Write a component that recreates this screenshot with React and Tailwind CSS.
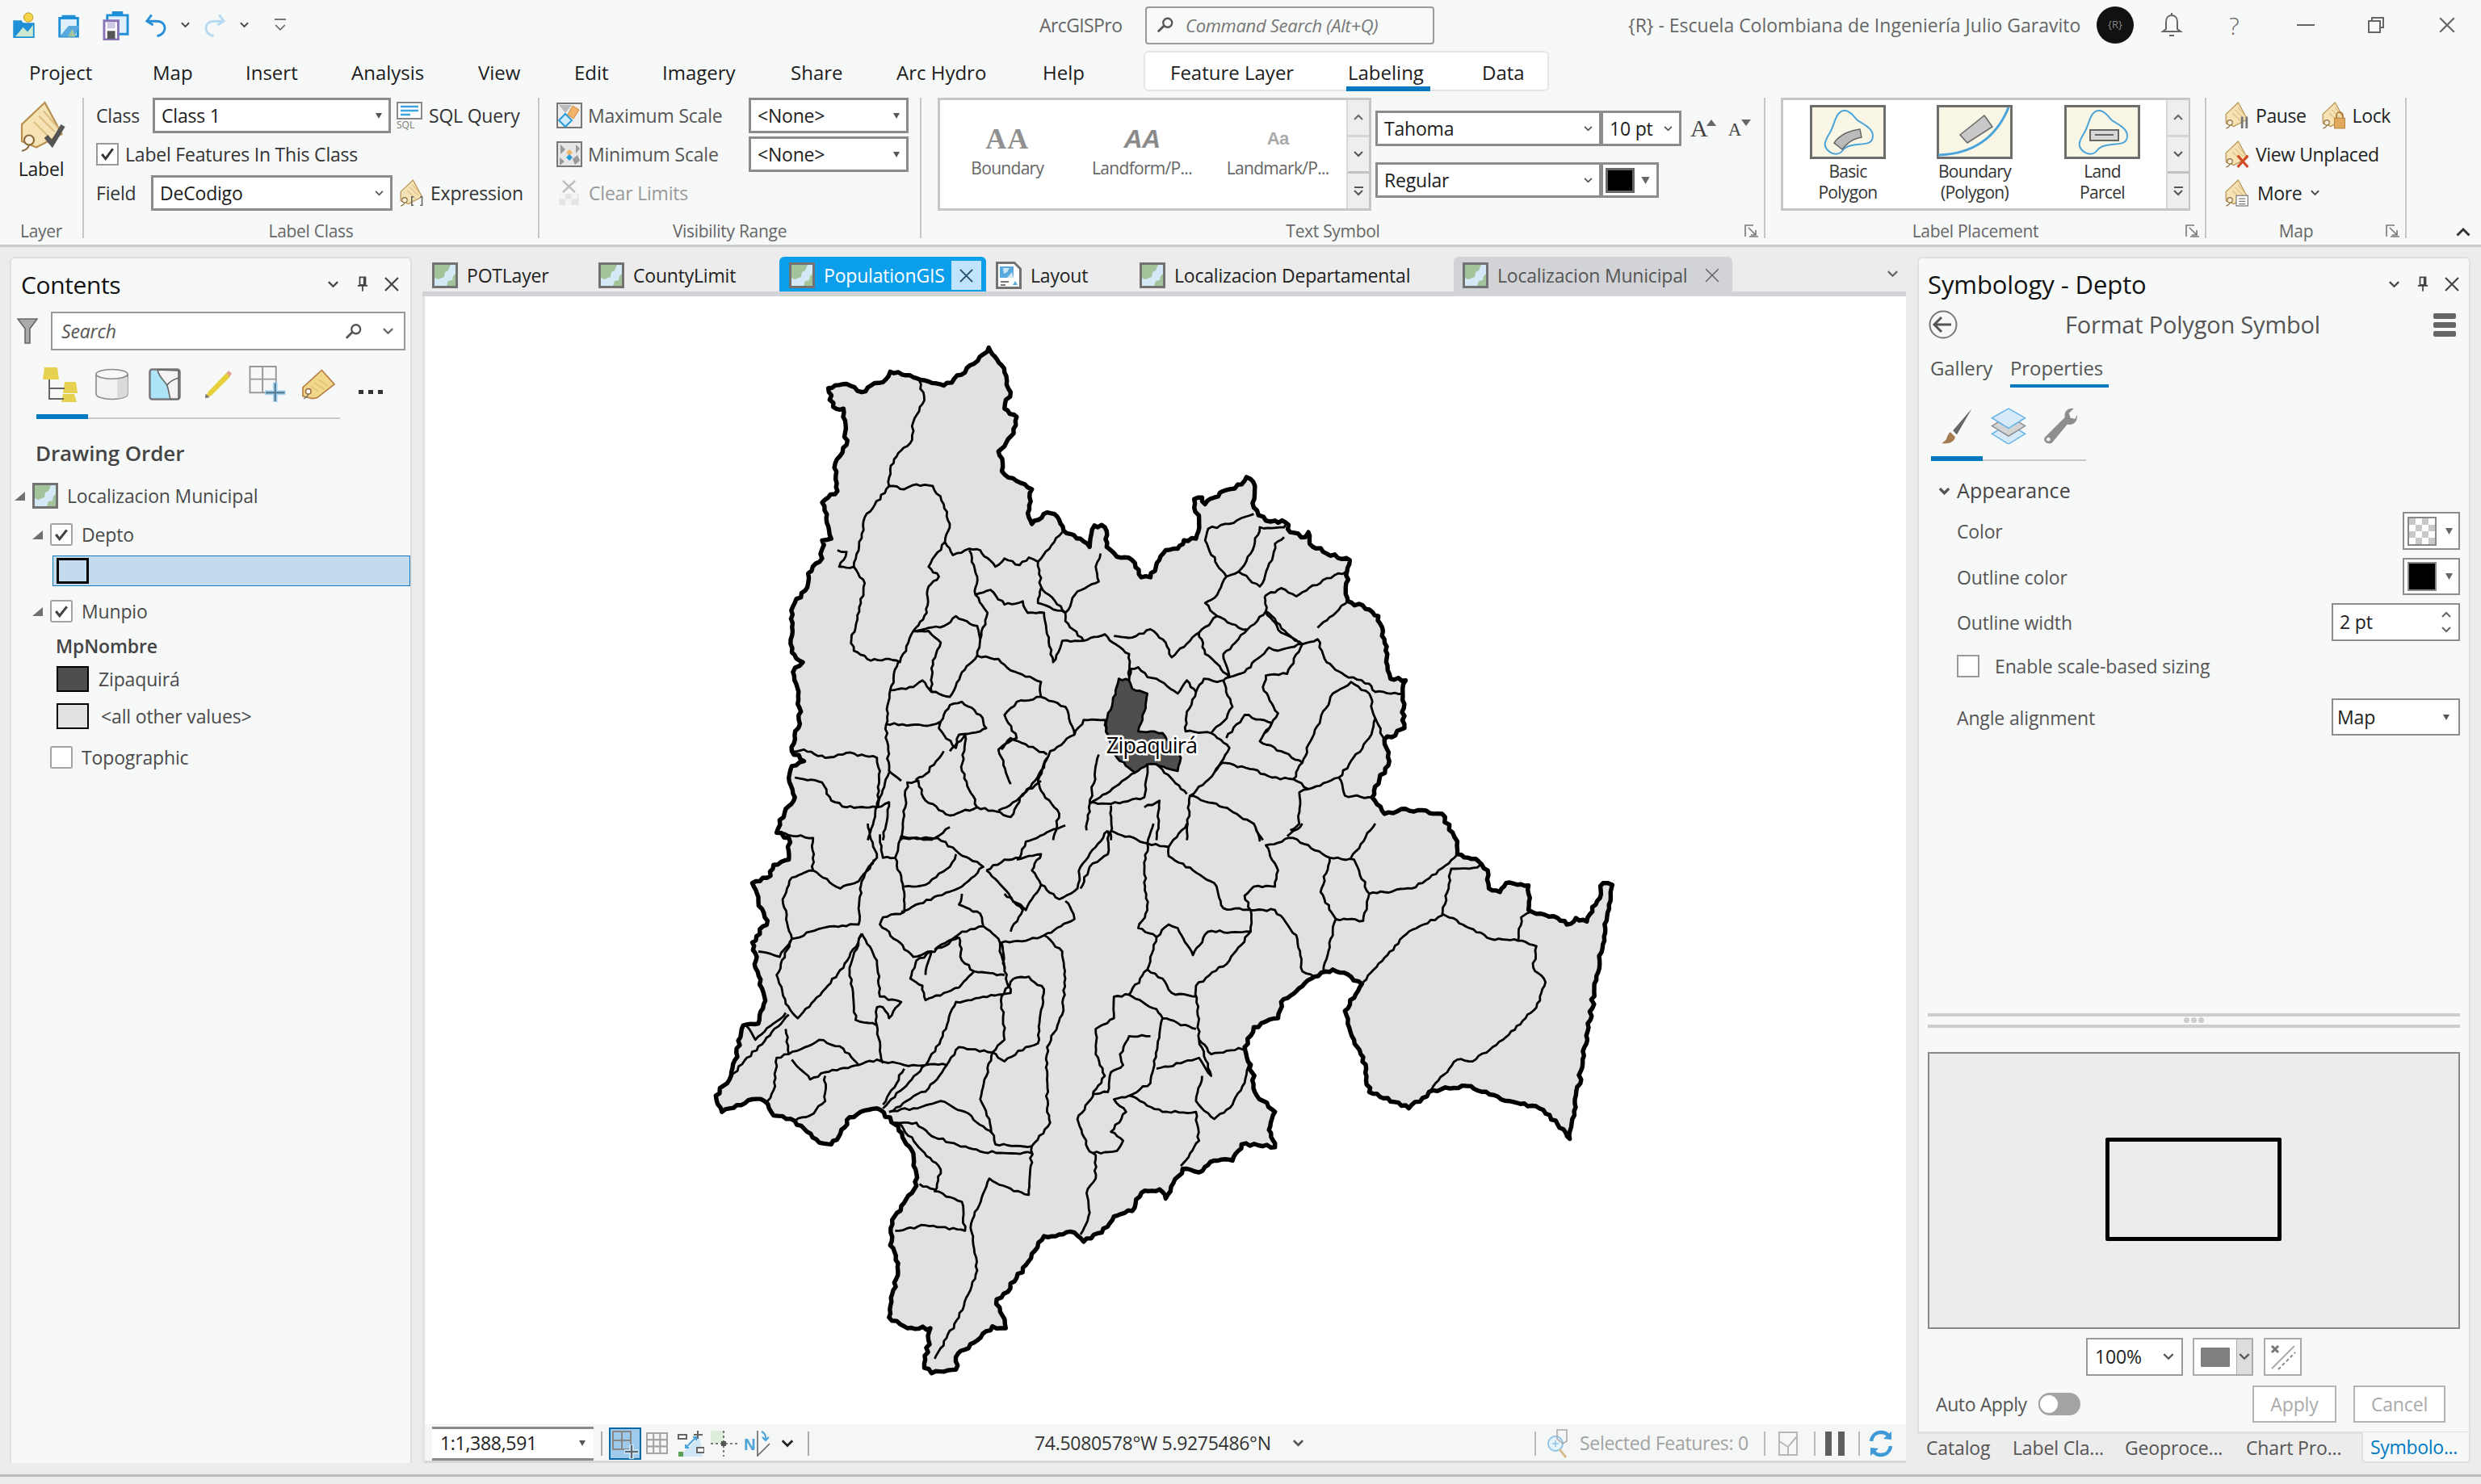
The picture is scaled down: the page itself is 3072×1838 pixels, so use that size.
import React from 'react'

// map tracing: points are read off two crops, f1 / f2 take them to page pixels
const f1 = ([x, y]) => [860 + x * 0.7526, 400 + y * 0.408]
const f2 = ([x, y]) => [860 + x * 0.7526, 1020 + y * 0.4464]
const parse = (s) => s.trim().split(/\s+/).map((p) => p.split(',').map(Number))

const noise = (n) => {
  const v = Math.sin(n * 12.9898) * 43758.5453
  return v - Math.floor(v) - 0.5
}

// breaks long straight runs into small wobbles so borders look digitised
const wiggle = (pts, amp, seed) => {
  const out = []
  let k = seed
  for (let i = 0; i < pts.length - 1; i++) {
    const [ax, ay] = pts[i]
    const [bx, by] = pts[i + 1]
    const len = Math.hypot(bx - ax, by - ay)
    const steps = Math.max(1, Math.round(len / 5))
    for (let s = 0; s < steps; s++) {
      const t = s / steps
      const off = s === 0 ? 0 : noise(k++) * amp * 2
      out.push([ax + (bx - ax) * t + (-(by - ay) / len) * off, ay + (by - ay) * t + ((bx - ax) / len) * off])
    }
  }
  out.push(pts[pts.length - 1])
  return out
}
const toD = (pts) => 'M' + pts.map((p) => p[0].toFixed(1) + ' ' + p[1].toFixed(1)).join('L')

const outerA = `484,75 490,95 505,128 510,150 520,210 510,260 530,285 525,335 500,390 510,460 530,480 555,505 550,590 555,610 580,575 592,580 607,630 635,655 650,680 658,615 675,620 678,680 695,710 720,720 735,772 750,772 775,690 795,685 805,660 825,655 830,610 822,535 835,530 840,550 870,510 900,490 908,468 922,495 920,560 940,600 955,600 972,605 980,635 1005,650 1010,635 1012,670 1040,700 1078,720 1072,790 1075,845 1110,870 1125,890 1135,960 1140,1040 1145,1080 1170,1085 1165,1120 1168,1230 1135,1265 1143,1330 1118,1420 1115,1440 1135,1490 1170,1475 1230,1490 1250,1560`
const outerB = `1255,50 1255,85 1290,105 1305,130 1307,180 1325,190 1335,165 1372,172 1372,240 1420,262 1435,280 1450,262 1468,272 1485,215 1495,165 1510,170 1440,875 1420,835 1390,790 1340,770 1270,728 1215,740 1175,790 1110,745 1105,680 1085,600 1070,520 1098,445 1080,425 1050,405 1020,425 990,465 965,495 960,540 920,565 905,620 917,690 925,755 955,800 945,850 955,898 900,890 885,935 855,935 830,968 803,958 775,1040 765,1015 735,1025 720,1075 690,1090 670,1135 640,1160 625,1135 575,1145 545,1225 530,1260 505,1315 497,1320 512,1400 490,1395 460,1440 430,1480 430,1515 390,1525 378,1510 388,1400 350,1400 320,1370 335,1220 322,1170 325,1100 365,1005 360,915 335,840 300,790 255,815 240,860 225,890 205,885 165,825 130,810 115,770 95,765 45,800 35,755 60,700 80,560 105,555 115,480 100,400 100,360 95,330 120,270 105,215 95,165 125,145 130,115 155,100 155,40 135,25`
const outerC = `150,1475 165,1440 155,1380 160,1345 180,1330 160,1300 175,1180 162,1060 178,1030 160,1000 162,860 187,790 187,760 210,715 210,660 225,655 210,545 235,510 230,440 250,370 245,260 228,255 220,198 250,185 275,210 290,190 310,180 322,148 360,165 385,178 410,190 445,150 475,95 484,75`

const innerA = [
  '370,175 378,235 360,300 358,355 335,395 322,445 320,495 345,505 365,490 392,495 410,550 420,610 412,665 385,740 402,770 385,800 382,880 360,935 338,1030 320,1020 290,1025 262,995 258,960 268,900 280,790 262,740 275,640 280,590 320,495',
  '235,690 250,695 238,740 262,740',
  '412,665 425,705 445,690 452,685 470,690 495,740 510,715 535,735 550,712 565,725 605,635',
  '565,725 570,800 610,880 630,815 665,785 660,740 668,700',
  '452,690 465,770 462,825 487,810 510,855 540,845 548,880 575,880 590,1030 605,965 640,965 675,945 688,970 715,1005 715,1085',
  '570,805 565,850 610,880 610,905 640,965',
  '462,825 482,880 470,960 465,1010 500,1020 520,1055 570,1090 570,1135 530,1150 510,1190 530,1260 500,1295 520,1400',
  '360,935 385,935 405,970 392,1025 390,1120 420,1135 440,1060 465,1010',
  '360,935 410,920 430,890 465,920 470,960',
  '335,1030 322,1115 315,1220 320,1360 340,1390',
  '322,1115 360,1105 375,1085 390,1120',
  '315,1218 390,1220 405,1210 420,1160 440,1150 470,1190 480,1230 470,1240 435,1250 430,1290 410,1250 402,1230 405,1210',
  '160,1300 180,1295 215,1320 250,1305 300,1320 305,1360 300,1470 250,1470 225,1450 210,1395 180,1385 165,1380',
  '570,1135 610,1165 625,1250 585,1300 575,1350 560,1390 530,1450 500,1480',
  '625,1250 640,1205 675,1205 680,1250',
  '715,1085 718,1050 730,1045 745,1075 760,1080 795,1125 810,1085 825,1120 810,1180 808,1240 850,1245 880,1290 855,1365 868,1335',
  '825,1120 838,1080 860,1090 870,1085 885,1165 870,1210 850,1245',
  '690,950 720,955 750,930 775,970 785,1015 830,940 860,890 840,850 860,825 875,770 860,735 840,660 845,625 880,610 920,580',
  '830,940 840,1005 860,1035 870,1060 880,1075 870,1085',
  '860,890 895,925 910,930 940,875 980,950 1000,975 1025,960 1040,1030 1070,1070 1110,1095 1120,1120 1165,1125',
  '875,770 895,755 915,700 930,620 970,620 975,605',
  '970,650 955,670 950,720 930,800 895,755',
  '938,830 965,805 990,830 1040,775 1072,755',
  '938,830 940,875 965,940 1000,975',
  '1025,925 1060,870 1075,840',
  '910,930 890,970 870,1005 880,1075 905,1060 945,985 960,995 1000,975 975,1065 940,1070 935,1105 960,1185 930,1270 965,1300 1000,1335 985,1385 950,1380 920,1355 868,1335',
  '930,1270 950,1215 905,1190 875,1260',
  '1000,1335 1010,1280 1050,1125 1080,1090 1110,1125 1120,1200 1110,1260 1060,1380 1010,1415 985,1385',
  '1120,1200 1135,1265',
  '1060,1380 1070,1435 1115,1440',
  '1010,1415 995,1425 995,1520 980,1540',
  '855,1365 815,1435 870,1470 920,1520 935,1570',
  '815,1435 810,1570',
  '760,1340 810,1430',
  '725,1365 650,1460 645,1540',
  '745,1340 740,1440 685,1460 650,1455',
  '740,1470 765,1450 760,1570',
  '685,1465 685,1570',
  '665,1310 650,1460',
  '580,1320 565,1390 570,1420 600,1490 590,1570',
  '505,1295 520,1260 580,1310',
  '410,1300 380,1370 365,1385 380,1450 420,1495 465,1470 490,1480 520,1500 540,1430 570,1390',
  '420,1300 445,1250 440,1360 465,1470',
  '370,1390 350,1395 340,1570',
  '320,1365 305,1440 285,1570',
  '300,1470 320,1455 310,1570',
]
const innerB = [
  '285,0 300,95 270,160 240,180 195,130 195,40 135,25',
  '195,130 160,150 145,210 160,320 140,370 105,355',
  '160,320 210,290 270,280 275,160 295,100',
  '305,30 310,95 330,95 340,35 390,45 420,10',
  '330,95 345,190 345,245 310,260 305,280 360,370 390,355 380,420',
  '340,40 400,40 430,75 475,120 440,175 400,200 340,245',
  '345,175 380,170 420,120 430,85',
  '480,130 540,240 520,300',
  '480,130 510,100 535,95 545,50 610,5',
  '530,100 570,85 555,130 570,170 600,210 630,180 635,120 680,20',
  '570,170 545,240 510,195',
  '685,20 745,55 780,65 780,90 855,165 870,235 915,240 915,300 880,380 825,450 830,600 850,640 915,620',
  '745,55 740,130 745,240 730,290 760,315 745,405',
  '780,65 810,0',
  '745,55 755,0',
  '620,240 625,265 575,310 545,325 505,330 510,410',
  '610,215 620,240',
  '680,20 680,85 650,120 635,180',
  '440,195 435,225 470,250 475,285 440,300 395,350',
  '475,285 500,320 510,410 520,470 430,495 405,600 380,670 310,790',
  '575,310 605,355 610,430 605,530 580,620 580,790 585,830 555,895',
  '525,430 550,425 575,460 565,610 545,620 510,660 490,635 510,600 505,480 525,430',
  '435,315 440,380 460,410 510,420',
  '435,315 365,380 355,430 375,450 380,490 410,470 435,455 460,410',
  '275,305 300,380 305,480 340,495 320,540 310,510 300,510 300,560 265,545 255,400 275,305',
  '275,310 245,400 170,540 150,500 135,420 160,320',
  '150,525 100,600 85,560',
  '155,530 60,700',
  '150,570 155,640 135,650 130,740 120,770',
  '155,640 205,600 245,625 270,670 300,655 345,670 380,670',
  '160,655 190,710 215,690 240,680 270,670',
  '215,700 215,770 190,810 165,825',
  '300,560 310,665',
  '345,680 310,780',
  '415,670 385,735 320,800',
  '380,670 415,670 435,620 490,635 470,765 485,820 495,890 555,895',
  '320,800 360,790 405,770 445,800 490,860',
  '330,830 365,830 385,860 420,885 470,910 555,915',
  '335,830 365,890 405,960 395,1020 440,1050 445,1130 380,1115 330,1130',
  '395,1015 370,1000',
  '555,895 550,1030 525,1020 485,985 455,1110 460,1180 465,1240 435,1370 395,1485',
  '745,405 715,475 690,480 690,540 660,570 660,640 675,700 630,820 650,910 660,920 660,985 645,1025 650,1080 635,1140',
  '745,405 770,430 785,470 825,480',
  '715,475 760,515 770,540 825,570',
  '770,540 755,680 750,720 715,755 690,765 710,800 685,855 705,880 695,908 655,915',
  '830,600 850,700 830,650 800,665 760,680',
  '750,590 715,590 700,640 705,670 685,690 680,745 655,750',
  '835,700 825,770 855,820 885,780 905,720 915,650',
  '715,755 770,800 825,800 830,880 800,950',
  '915,300 845,300 820,365 795,290 780,280 760,315',
  '915,240 955,240 990,310 1000,410 1020,425',
  '915,240 905,200 920,175 955,175 960,130 940,60 985,40 1045,95 1030,190 1055,265 1035,410',
  '1045,95 1085,100 1110,195 1100,270 1055,265',
  '1110,195 1180,180 1220,140 1255,85',
  '1080,95 1120,0',
  '930,50 920,0',
  '975,35 1000,0',
  '1100,440 1140,365 1175,300 1230,255 1245,125 1275,125 1300,115',
  '1230,250 1310,320 1355,325 1385,340 1380,400 1400,440 1385,510 1330,600 1280,660 1255,655 1215,730 1210,750',
  '1355,325 1360,260 1375,245',
]
const zipaPts = '698,1080 715,1085 720,1110 745,1125 740,1180 730,1240 750,1240 770,1245 800,1320 795,1360 760,1340 745,1340 725,1365 695,1320 680,1250 675,1220 688,1150 698,1080'

const outerPts = [...parse(outerA).map(f1), ...parse(outerB).map(f2), ...parse(outerC).map(f1)]
const outerD = toD(wiggle(outerPts, 2.2, 3)) + 'Z'
const innerD = [
  ...innerA.map((s, i) => toD(wiggle(parse(s).map(f1), 1.5, 100 + i * 50))),
  ...innerB.map((s, i) => toD(wiggle(parse(s).map(f2), 1.5, 4000 + i * 50))),
].join('')
const zipaD = toD(wiggle(parse(zipaPts).map(f1), 1.2, 9000)) + 'Z'

const MapDrawing = () => (
  <svg viewBox="526 367 1834 1397" className="block w-[1834px] h-[1397px]">
    <defs>
      <clipPath id="dept"><path d={outerD} /></clipPath>
    </defs>
    <path d={outerD} fill="#e1e1e1" />
    <g clipPath="url(#dept)" fill="none" stroke="#000" strokeWidth="2.8" strokeLinejoin="round">
      <path d={zipaD} fill="#4e4e4e" />
      <path d={innerD} />
    </g>
    <path d={outerD} fill="none" stroke="#000" strokeWidth="5.4" strokeLinejoin="round" />
    <text x="1426" y="933" textAnchor="middle" fontSize="27" fontFamily="Open Sans, sans-serif" letterSpacing="-0.8" fill="#000" stroke="#fff" strokeWidth="5" paintOrder="stroke">Zipaquirá</text>
  </svg>
)

// small drawn bits
const Chev = ({ className = 'w-[12px] h-[8px]', color = '#555', w = 2 }) => (
  <svg viewBox="0 0 12 8" className={className}><path d="M1 1l5 5 5-5" fill="none" stroke={color} strokeWidth={w} /></svg>
)
const ChevUp = ({ className = 'w-[12px] h-[8px]', color = '#666', w = 2 }) => (
  <svg viewBox="0 0 12 8" className={className}><path d="M1 7l5-5 5 5" fill="none" stroke={color} strokeWidth={w} /></svg>
)
const Tri = ({ className = 'w-[8px] h-[7px]', color = '#555' }) => (
  <svg viewBox="0 0 8 7" className={className}><path d="M0 0h8L4 7z" fill={color} /></svg>
)
const Cross = ({ className = 'w-[20px] h-[20px]', color = '#444', w = 2 }) => (
  <svg viewBox="0 0 20 20" className={className}><path d="M2 2l16 16M18 2L2 18" stroke={color} strokeWidth={w} /></svg>
)
const Pin = ({ className = 'w-[16px] h-[22px]' }) => (
  <svg viewBox="0 0 16 22" className={className}><path d="M4 1h8v11H4zM1 13h14M8 13v8" fill="none" stroke="#444" strokeWidth="2" /><path d="M9 2h3v10H9z" fill="#444" /></svg>
)
const Lens = ({ className = 'w-[24px] h-[22px]', color = '#555' }) => (
  <svg viewBox="0 0 24 22" className={className}><circle cx="15" cy="8" r="6" fill="none" stroke={color} strokeWidth="2.5" /><path d="M10 12L2 20" stroke={color} strokeWidth="3" /></svg>
)
const Launcher = () => (
  <svg viewBox="0 0 18 16" className="w-[18px] h-[16px]"><path d="M1 15V1h10M6 15h11" fill="none" stroke="#777" strokeWidth="1.6" /><path d="M5 4l9 9M14 7v6H8" fill="none" stroke="#777" strokeWidth="1.6" /></svg>
)
const MapThumb = ({ className = 'w-[32px] h-[32px]' }) => (
  <svg viewBox="0 0 32 32" className={className}>
    <rect x="1.5" y="1.5" width="29" height="29" fill="#d3eaf6" stroke="#727272" strokeWidth="3" />
    <path d="M3 3h20l-3 7-4 2-1 6-8 3-4-2z" fill="#a3c49a" />
    <path d="M29 14v15H18l2-6 5-1 1-5z" fill="#a3c49a" />
  </svg>
)
const Tag = ({ className, badge }) => (
  <svg viewBox="0 0 40 44" className={className}>
    <path d="M23 2l14 26-21 11-12-5V20z" fill="#f5e3b5" stroke="#b8904f" strokeWidth="1.5" />
    <path d="M14 18l13 13M18 13l13 13M22 9l12 14" stroke="#dcbc80" strokeWidth="1.3" />
    <circle cx="10" cy="33" r="4" fill="#f9f1dc" stroke="#8a6a3a" strokeWidth="1.4" />
    <path d="M10 37q-1 4-6 5" fill="none" stroke="#8a6a3a" strokeWidth="1.3" />
    {badge}
  </svg>
)

const Select = ({ className, text, caret = 'tri', border = 'border-[#8c8c8c]' }) => (
  <div className={`flex items-center justify-between bg-white border-[3px] px-[8px] ${border} ${className}`}>
    <span className="text-[#1c1c1c] whitespace-nowrap">{text}</span>
    {caret === 'tri' ? <Tri /> : <Chev className="w-[11px] h-[7px]" />}
  </div>
)

const ScrollCol = () => (
  <div className="w-[28px] h-full flex flex-col bg-[#eceeef] border-l-[2px] border-[#d6d8da]">
    <div className="flex-1 flex items-center justify-center border-b-[3px] border-[#d3d5d7]"><ChevUp /></div>
    <div className="flex-1 flex items-center justify-center border-b-[3px] border-[#c0c2c4]"><Chev /></div>
    <div className="flex-1 flex flex-col items-center justify-center gap-[2px]">
      <div className="w-[11px] h-[2px] bg-[#555]" />
      <Chev />
    </div>
  </div>
)

const Group = ({ className, label, launcher, children }) => (
  <div className={`flex flex-col shrink-0 border-r-[2px] border-[#c4c6c8] ${className}`}>
    <div className="h-[140px] flex">{children}</div>
    <div className="h-[34px] flex items-end text-[#666] text-[21px] tracking-[-0.3px]">
      <div className="flex-1 text-center leading-[24px] translate-y-[3px]">{label}</div>
      {launcher && <div className="w-[24px] pb-[1px]"><Launcher /></div>}
    </div>
  </div>
)

const Qat = () => (
  <div className="w-[1287px] shrink-0 flex items-center">
    <svg viewBox="0 0 32 36" className="ml-[14px] w-[31px] h-[34px]">
      <path d="M2 12h11l2 3h15v20H2z" fill="#1f8fd6" />
      <path d="M5 33l10-12 6 6 7-9v15z" fill="#cde9d0" />
      <circle cx="22" cy="8" r="6" fill="#f5d547" stroke="#b48f1a" />
    </svg>
    <svg viewBox="0 0 32 36" className="ml-[25px] w-[32px] h-[34px]">
      <path d="M6 5h18v4H6z" fill="#1f8fd6" /><path d="M3 9h24v24H3z" fill="#dff0fa" stroke="#1f8fd6" strokeWidth="3" />
      <path d="M3 33l12-14h14l-6 14z" fill="#58a9de" /><path d="M14 33l6-10 4 10z" fill="#a3c49a" />
    </svg>
    <svg viewBox="0 0 34 38" className="ml-[25px] w-[33px] h-[37px]">
      <path d="M12 1h14v5H12z" fill="#1f8fd6" /><path d="M6 6h26v24H6z" fill="#dff0fa" stroke="#1f8fd6" strokeWidth="3" />
      <path d="M2 13h18v24H2z" fill="#fff" stroke="#8a72b8" strokeWidth="3" /><path d="M6 26h10v10H6z" fill="#555" /><path d="M6 15h10v8H6z" fill="#cfc6e2" />
    </svg>
    <svg viewBox="0 0 28 32" className="ml-[20px] w-[27px] h-[32px]">
      <path d="M8 3L2 11l8 5M3 11h11c8 0 11 5 11 9s-3 9-10 10" fill="none" stroke="#2b8fd8" strokeWidth="3" />
    </svg>
    <Chev className="ml-[17px] w-[11px] h-[8px]" color="#444" />
    <svg viewBox="0 0 28 32" className="ml-[17px] w-[27px] h-[32px]">
      <path d="M20 3l6 8-8 5M25 11H14C6 11 3 16 3 20s3 9 10 10" fill="none" stroke="#b7daf2" strokeWidth="3" />
    </svg>
    <Chev className="ml-[18px] w-[11px] h-[8px]" color="#444" />
    <div className="ml-[32px] flex flex-col items-center gap-[4px]">
      <div className="w-[14px] h-[2px] bg-[#777]" />
      <Chev className="w-[14px] h-[11px]" color="#666" w={1.4} />
    </div>
  </div>
)

const TitleBar = () => (
  <div className="h-[62px] flex items-center text-[23px] text-[#666]">
    <Qat />
    <div className="w-[131px] shrink-0 tracking-[-0.6px]">ArcGISPro</div>
    <div className="w-[358px] h-[47px] shrink-0 flex items-center border-[2px] border-[#9a9a9a] rounded-[4px] bg-[#f8f9f9] pl-[12px]">
      <Lens className="w-[22px] h-[26px]" />
      <span className="ml-[14px] italic text-[#777] text-[22px] tracking-[-0.3px] whitespace-nowrap">Command Search (Alt+Q)</span>
    </div>
    <div className="w-[240px] shrink-0" />
    <div className="w-[563px] shrink-0 whitespace-nowrap">{'{R} - Escuela Colombiana de Ingeniería Julio Garavito'}</div>
    <div className="ml-[17px] w-[46px] h-[46px] rounded-full bg-[#111] shrink-0 flex items-center justify-center text-[#888] text-[13px]">{'{R}'}</div>
    <svg viewBox="0 0 28 34" className="ml-[33px] w-[28px] h-[34px]"><path d="M14 2v3M7 22V13c0-5 3-8 7-8s7 3 7 8v9l4 3H3z M11 30h6" fill="none" stroke="#666" strokeWidth="2" /></svg>
    <div className="ml-[57px] text-[30px] font-light">?</div>
    <div className="ml-[71px] w-[22px] h-[2px] bg-[#666]" />
    <svg viewBox="0 0 20 20" className="ml-[66px] w-[20px] h-[20px]"><path d="M5 5V1h14v12h-4M1 5h14v14H1z" fill="none" stroke="#666" strokeWidth="2" /></svg>
    <Cross className="ml-[67px] w-[22px] h-[22px]" color="#666" />
  </div>
)

const MenuRow = () => (
  <div className="h-[59px] flex items-start text-[24px] text-[#1c1c1c]">
    <div className="w-[189px] h-[56px] flex items-center pl-[36px]">Project</div>
    <div className="w-[115px] h-[56px] flex items-center">Map</div>
    <div className="w-[131px] h-[56px] flex items-center">Insert</div>
    <div className="w-[157px] h-[56px] flex items-center">Analysis</div>
    <div className="w-[119px] h-[56px] flex items-center">View</div>
    <div className="w-[109px] h-[56px] flex items-center">Edit</div>
    <div className="w-[159px] h-[56px] flex items-center">Imagery</div>
    <div className="w-[131px] h-[56px] flex items-center">Share</div>
    <div className="w-[181px] h-[56px] flex items-center">Arc Hydro</div>
    <div className="w-[125px] h-[56px] flex items-center">Help</div>
    <div className="w-[502px] h-[50px] mt-[1px] flex bg-white rounded-[6px] border-[2px] border-[#e4e6e6]">
      <div className="w-[249px] h-[46px] pl-[31px] pt-[10px] leading-[30px]">Feature Layer</div>
      <div className="w-[104px] h-[48px] flex flex-col justify-between">
        <div className="pt-[10px] leading-[30px] pl-[2px]">Labeling</div>
        <div className="h-[6px] bg-[#0079c1]" />
      </div>
      <div className="pl-[64px] pt-[10px] leading-[30px]">Data</div>
    </div>
  </div>
)

const Ribbon = () => (
  <div className="h-[174px] flex text-[23px] tracking-[-0.2px] text-[#333]">
    <Group className="w-[104px]" label="Layer">
      <div className="w-full flex flex-col items-center pt-[3px]">
        <Tag
          className="w-[66px] h-[66px]"
          badge={<path d="M24 30l5 6 9-15" fill="none" stroke="#555" strokeWidth="4" />}
        />
        <div className="mt-[2px] text-[#1c1c1c]">Label</div>
      </div>
    </Group>

    <Group className="w-[564px]" label="Label Class">
      <div className="pl-[15px] flex flex-col gap-[4px] w-full">
        <div className="h-[44px] flex items-center">
          <span className="w-[70px]">Class</span>
          <Select className="w-[295px] h-[44px]" text="Class 1" />
          <div className="ml-[7px] w-[32px] flex flex-col">
            <svg viewBox="0 0 32 22" className="w-[32px] h-[22px]">
              <rect x="1" y="1" width="30" height="20" fill="#fff" stroke="#888" strokeWidth="2" />
              <path d="M5 6h22M5 11h22M5 16h12" stroke="#3fa3e0" strokeWidth="2.5" />
            </svg>
            <span className="text-[12px] leading-[13px] tracking-normal text-[#777]">SQL</span>
          </div>
          <span className="ml-[8px] whitespace-nowrap">SQL Query</span>
        </div>
        <div className="h-[44px] flex items-center">
          <div className="w-[28px] h-[28px] border-[2px] border-[#999] bg-white flex items-center justify-center">
            <svg viewBox="0 0 16 16" className="w-[18px] h-[18px]"><path d="M2 8l4 5 8-11" fill="none" stroke="#333" strokeWidth="2.6" /></svg>
          </div>
          <span className="ml-[8px] whitespace-nowrap">Label Features In This Class</span>
        </div>
        <div className="h-[44px] flex items-center">
          <span className="w-[68px]">Field</span>
          <Select className="w-[299px] h-[44px]" text="DeCodigo" caret="chev" />
          <Tag
            className="ml-[7px] w-[32px] h-[36px]"
            badge={<path d="M24 28h-3v13h3M34 28h3v13h-3" fill="none" stroke="#666" strokeWidth="2" />}
          />
          <span className="ml-[8px] whitespace-nowrap">Expression</span>
        </div>
      </div>
    </Group>

    <Group className="w-[473px]" label="Visibility Range">
      <div className="pl-[21px] flex flex-col gap-[4px] w-full">
        <div className="h-[44px] flex items-center">
          <svg viewBox="0 0 32 32" className="w-[32px] h-[32px]">
            <rect x="1" y="1" width="30" height="30" fill="#efefef" stroke="#777" strokeWidth="2" />
            <path d="M3 3l8 10 8-10zM3 29l7-10" fill="#bbb" />
            <path d="M20 4l8 5-7 11-7-5z" fill="#f0b46a" stroke="#d8852c" />
            <path d="M11 14l8 8-8 8-8-8z" fill="#cfeafa" stroke="#2a9ad8" strokeWidth="2" />
          </svg>
          <span className="ml-[7px] w-[199px] text-[#555] whitespace-nowrap">Maximum Scale</span>
          <Select className="w-[198px] h-[44px]" text="<None>" />
        </div>
        <div className="h-[44px] flex items-center">
          <svg viewBox="0 0 32 32" className="w-[32px] h-[32px]">
            <rect x="1" y="1" width="30" height="30" fill="#e6e6e6" stroke="#777" strokeWidth="2" />
            <path d="M5 4l6 6-6 6zM24 4l5 5-5 6zM4 20l6 5-6 5zM20 22l6-5 3 7-6 5z" fill="#999" />
            <path d="M16 10l4 4-4 4-4-4z" fill="#f0b46a" />
            <path d="M16 16l4 4-4 4-4-4z" fill="#2a9ad8" />
          </svg>
          <span className="ml-[7px] w-[199px] text-[#555] whitespace-nowrap">Minimum Scale</span>
          <Select className="w-[198px] h-[44px]" text="<None>" />
        </div>
        <div className="h-[44px] flex items-center">
          <svg viewBox="0 0 32 34" className="w-[31px] h-[32px]">
            <path d="M8 1l16 15M24 1L8 16" stroke="#bbb" strokeWidth="2.5" />
            <path d="M3 18h26v15H3z" fill="#e4e4e4" />
            <path d="M3 18h8v7H3zM19 18h8v7h-8zM11 25h8v8h-8z" fill="#f4f4f4" />
          </svg>
          <span className="ml-[9px] text-[#999] whitespace-nowrap">Clear Limits</span>
        </div>
      </div>
    </Group>

    <Group className="w-[1045px]" label="Text Symbol" launcher>
      <div className="pl-[20px] flex">
        <div className="w-[537px] h-[140px] flex bg-white border-[3px] border-[#c4c6c8] text-[#666] text-[21px] tracking-[-0.7px]">
          <div className="w-[167px] flex flex-col items-center pt-[26px]">
            <div className="font-['Liberation_Serif',serif] font-bold text-[36px] leading-[44px] text-[#909090] tracking-[1px]">AA</div>
            <div className="leading-[28px]">Boundary</div>
          </div>
          <div className="w-[167px] flex flex-col items-center pt-[26px]">
            <div className="font-['Liberation_Sans',sans-serif] italic font-bold text-[32px] leading-[44px] text-[#8a8a8a]">AA</div>
            <div className="leading-[28px] whitespace-nowrap">Landform/P...</div>
          </div>
          <div className="w-[170px] flex flex-col items-center pt-[26px]">
            <div className="font-['Liberation_Sans',sans-serif] font-bold text-[22px] leading-[44px] text-[#aaa]">Aa</div>
            <div className="leading-[28px] whitespace-nowrap">Landmark/P...</div>
          </div>
          <ScrollCol />
        </div>
        <div className="ml-[5px] pt-[16px] flex flex-col gap-[20px]">
          <div className="h-[44px] flex items-center">
            <Select className="w-[280px] h-[44px]" text="Tahoma" caret="chev" />
            <Select className="w-[100px] h-[44px] -ml-[1px]" text="10 pt" caret="chev" />
            <span className="ml-[11px] font-['Liberation_Serif',serif] text-[30px] leading-[32px] text-[#444] tracking-normal">A</span>
            <svg viewBox="0 0 12 8" className="-ml-[2px] mb-[14px] w-[12px] h-[8px]"><path d="M0 8l6-8 6 8z" fill="#666" /></svg>
            <span className="ml-[15px] font-['Liberation_Serif',serif] text-[23px] leading-[32px] text-[#444] tracking-normal pt-[3px]">A</span>
            <svg viewBox="0 0 12 8" className="mb-[14px] w-[12px] h-[8px]"><path d="M0 0h12L6 8z" fill="#666" /></svg>
          </div>
          <div className="h-[44px] flex items-center">
            <Select className="w-[280px] h-[44px]" text="Regular" caret="chev" />
            <div className="-ml-[1px] w-[72px] h-[44px] flex items-center bg-white border-[3px] border-[#8c8c8c] pl-[3px]">
              <div className="w-[36px] h-[31px] bg-black border-[3px] border-[#666]" />
              <Tri className="ml-[8px] w-[11px] h-[9px]" color="#666" />
            </div>
          </div>
        </div>
      </div>
    </Group>

    <Group className="w-[546px]" label="Label Placement" launcher>
      <div className="pl-[19px]">
        <div className="w-[507px] h-[140px] flex bg-white border-[3px] border-[#c4c6c8] text-[#333] text-[21px] tracking-[-0.7px] leading-[26px]">
          <div className="w-[158px] flex flex-col items-center pt-[6px] pl-[2px]">
            <svg viewBox="0 0 94 67" className="w-[94px] h-[67px] shrink-0">
              <rect x="1.5" y="1.5" width="91" height="64" fill="#f9f6e6" stroke="#6d6d6d" strokeWidth="3" />
              <path d="M44 7C52 8 55 16 59 19S78 28 78 38 70 48 59 49 44 52 40 57 28 62 22 56 19 44 25 34 32 6 44 7z" fill="none" stroke="#4aa3d9" strokeWidth="2" />
              <path d="M33 43Q44 32 62 30L64 40Q50 42 40 55L30 47z" fill="#bbb" stroke="#666" strokeWidth="1.5" />
            </svg>
            <div className="mt-[2px] text-center">Basic<br />Polygon</div>
          </div>
          <div className="w-[158px] flex flex-col items-center pt-[6px]">
            <svg viewBox="0 0 94 67" className="w-[94px] h-[67px] shrink-0">
              <rect x="1.5" y="1.5" width="91" height="64" fill="#f9f6e6" stroke="#6d6d6d" strokeWidth="3" />
              <path d="M2 62Q66 60 89 3" fill="none" stroke="#4aa3d9" strokeWidth="3" />
              <path d="M59 13L69 27 38 47 29 37z" fill="#c8c8c8" stroke="#666" strokeWidth="1.5" />
            </svg>
            <div className="mt-[2px] text-center">Boundary<br />(Polygon)</div>
          </div>
          <div className="w-[158px] flex flex-col items-center pt-[6px]">
            <svg viewBox="0 0 94 67" className="w-[94px] h-[67px] shrink-0">
              <rect x="1.5" y="1.5" width="91" height="64" fill="#f9f6e6" stroke="#6d6d6d" strokeWidth="3" />
              <path d="M44 7C52 8 55 16 59 19S78 28 78 38 70 48 59 49 44 52 40 57 28 62 22 56 19 44 25 34 32 6 44 7z" fill="none" stroke="#4aa3d9" strokeWidth="2" />
              <rect x="32" y="31" width="35" height="13" fill="#d8d8d8" stroke="#666" strokeWidth="2" />
              <path d="M38 37h23" stroke="#666" strokeWidth="2" />
            </svg>
            <div className="mt-[2px] text-center">Land<br />Parcel</div>
          </div>
          <div className="w-[27px]"><ScrollCol /></div>
        </div>
      </div>
    </Group>

    <Group className="w-[248px]" label="Map" launcher>
      <div className="pl-[21px] flex flex-col gap-[4px] w-full text-[#222] tracking-[-0.4px]">
        <div className="h-[44px] flex items-center">
          <Tag className="w-[32px] h-[38px]" badge={<path d="M29 24v18M36 24v18" stroke="#777" strokeWidth="3.5" />} />
          <span className="ml-[8px]">Pause</span>
          <Tag
            className="ml-[17px] w-[32px] h-[38px]"
            badge={<g><rect x="22" y="26" width="16" height="16" fill="#e0a95c" stroke="#a8742c" /><path d="M25 26v-4a5 5 0 0 1 10 0v4" fill="none" stroke="#a8742c" strokeWidth="2" /></g>}
          />
          <span className="ml-[8px]">Lock</span>
        </div>
        <div className="h-[44px] flex items-center">
          <Tag className="w-[32px] h-[38px]" badge={<path d="M22 24l16 18M38 24L22 42" stroke="#d24a26" strokeWidth="4" />} />
          <span className="ml-[8px] whitespace-nowrap">View Unplaced</span>
        </div>
        <div className="h-[44px] flex items-center">
          <Tag className="w-[32px] h-[38px]" badge={<g><rect x="20" y="26" width="18" height="16" fill="#fff" stroke="#777" strokeWidth="1.5" /><path d="M24 31h10M24 35h10M24 39h10" stroke="#777" strokeWidth="1.5" /></g>} />
          <span className="ml-[10px]">More</span>
          <Chev className="ml-[11px] w-[11px] h-[8px]" color="#444" />
        </div>
      </div>
    </Group>

    <div className="flex-1 flex items-end justify-end pr-[12px] pb-[2px]">
      <ChevUp className="w-[20px] h-[12px]" color="#333" />
    </div>
  </div>
)

const Check = ({ on }) => (
  <div className="w-[28px] h-[28px] rounded-[3px] border-[2px] border-[#a2a2a2] bg-white flex items-center justify-center shrink-0">
    {on && <svg viewBox="0 0 16 14" className="w-[18px] h-[16px]"><path d="M2 7l4 5 8-10" fill="none" stroke="#444" strokeWidth="2.8" /></svg>}
  </div>
)
const Arrow = () => (
  <svg viewBox="0 0 13 11" className="w-[13px] h-[11px] shrink-0"><path d="M13 0v11H0z" fill="#707070" /></svg>
)

const Contents = () => (
  <div className="w-[498px] shrink-0 rounded-t-[6px] bg-[#f7f9f9] border-[2px] border-b-0 border-[#dedfe0] text-[23px] tracking-[-0.15px] text-[#4a4a4a]">
    <div className="h-[64px] flex items-center pl-[12px]">
      <span className="text-[30px] text-[#111] tracking-[-0.4px] flex-1">Contents</span>
      <Chev className="w-[15px] h-[9px]" color="#444" />
      <Pin className="ml-[22px] w-[14px] h-[20px]" />
      <Cross className="ml-[19px] mr-[13px] w-[20px] h-[20px]" color="#444" w={2.2} />
    </div>
    <div className="mt-[2px] flex items-center pl-[7px]">
      <svg viewBox="0 0 26 32" className="w-[26px] h-[32px]"><path d="M1 1h24L16 13v18h-6V13z" fill="#aaa" stroke="#666" strokeWidth="1.6" /></svg>
      <div className="ml-[16px] w-[439px] h-[48px] flex items-center bg-white border-[2px] border-[#999] pl-[11px] pr-[12px]">
        <span className="italic text-[#555] flex-1">Search</span>
        <Lens className="w-[22px] h-[21px]" />
        <Chev className="ml-[24px] w-[15px] h-[9px]" color="#666" />
      </div>
    </div>
    <div className="mt-[19px] ml-[27px] h-[45px] flex items-center">
      <div className="w-[65px] flex justify-center">
        <svg viewBox="0 0 44 44" className="w-[44px] h-[44px]">
          <path d="M3 1h16l2 15H1zM28 19h14l2 14H26zM26 34h14l3 10H24z" fill="#e6d250" />
          <path d="M9 16v24h18M9 27h19" fill="none" stroke="#666" strokeWidth="2" />
        </svg>
      </div>
      <div className="w-[65px] flex justify-center">
        <svg viewBox="0 0 42 40" className="w-[41px] h-[40px]">
          <path d="M1 7v25c0 4 9 7 20 7s20-3 20-7V7" fill="#f2f2f2" stroke="#888" strokeWidth="1.6" />
          <path d="M28 11h13v21c0 3-5 5-13 6z" fill="#dadada" />
          <ellipse cx="21" cy="7" rx="20" ry="6" fill="#f8f8f8" stroke="#888" strokeWidth="1.6" />
        </svg>
      </div>
      <div className="w-[65px] flex justify-center">
        <svg viewBox="0 0 40 40" className="w-[40px] h-[40px]">
          <rect x="1.5" y="1.5" width="37" height="37" rx="3" fill="#aee4f7" stroke="#777" strokeWidth="2.5" />
          <path d="M11 2c2 9 7 12 11 18 3 5 3 12 5 18h10V3z" fill="#f4f4f4" stroke="#666" strokeWidth="1.6" />
          <path d="M23 21c3-5 8-7 14-9" fill="none" stroke="#666" strokeWidth="1.6" />
        </svg>
      </div>
      <div className="w-[65px] flex justify-center">
        <svg viewBox="0 0 40 40" className="w-[38px] h-[40px]">
          <path d="M8 30L32 5l5 5-25 25-8 3z" fill="#e6d03c" />
          <path d="M32 5l3-3 4 4-3 4z" fill="#e8a08c" /><path d="M4 38l1-6 5 5z" fill="#777" />
        </svg>
      </div>
      <div className="w-[60px] flex justify-center">
        <svg viewBox="0 0 46 46" className="w-[46px] h-[45px]">
          <path d="M1 1h33v33H1zM17 1v33M1 17h33" fill="none" stroke="#999" strokeWidth="2" />
          <path d="M20 31h26v6H20zM30 21h6v25h-6z" fill="#a9d8f5" />
          <path d="M21 34h24M33 22v23" stroke="#5a7f96" strokeWidth="2.4" />
        </svg>
      </div>
      <div className="w-[66px] flex justify-center">
        <svg viewBox="0 0 44 40" className="w-[43px] h-[40px]">
          <path d="M2 24L26 2l16 18-22 17-6 1-12-3z" fill="#f0d78a" stroke="#b8834a" strokeWidth="1.8" />
          <path d="M17 18l12 8M22 14l12 8M12 22l10 7" stroke="#dcbf74" strokeWidth="1.3" />
          <circle cx="9" cy="29" r="3.4" fill="#fff" stroke="#9b6b3b" strokeWidth="1.6" /><path d="M9 32q-1 5-6 6" fill="none" stroke="#666" strokeWidth="1.3" />
        </svg>
      </div>
      <div className="ml-[17px] w-[30px] flex justify-between pt-[20px]">
        <div className="w-[6px] h-[5px] bg-[#333]" /><div className="w-[6px] h-[5px] bg-[#333]" /><div className="w-[6px] h-[5px] bg-[#333]" />
      </div>
    </div>
    <div className="mt-[15px] ml-[31px] flex items-end">
      <div className="w-[64px] h-[6px] bg-[#0079c1]" />
      <div className="w-[312px] h-[2px] bg-[#c6c8c8]" />
    </div>
    <div className="mt-[27px] ml-[30px] h-[30px] flex items-center text-[26px] font-semibold text-[#444] tracking-[-0.1px]">Drawing Order</div>
    <div className="mt-[18px] h-[40px] flex items-center pl-[4px]">
      <Arrow />
      <MapThumb className="ml-[9px] w-[32px] h-[32px]" />
      <span className="ml-[11px]">Localizacion Municipal</span>
    </div>
    <div className="mt-[8px] h-[40px] flex items-center pl-[26px]">
      <Arrow />
      <div className="ml-[9px]"><Check on /></div>
      <span className="ml-[11px]">Depto</span>
    </div>
    <div className="mt-[6px] ml-[51px] w-[443px] h-[38px] flex items-center bg-[#c4daef] border-[1.5px] border-[#0f78bf] pl-[4px]">
      <div className="w-[40px] h-[32px] bg-[#c4daef] border-[3px] border-black" />
    </div>
    <div className="mt-[11px] h-[40px] flex items-center pl-[26px]">
      <Arrow />
      <div className="ml-[9px]"><Check on /></div>
      <span className="ml-[11px]">Munpio</span>
    </div>
    <div className="mt-[8px] ml-[55px] h-[30px] flex items-center font-semibold text-[#444]">MpNombre</div>
    <div className="mt-[10px] ml-[56px] h-[32px] flex items-center">
      <div className="w-[40px] h-[32px] bg-[#4e4e4e] border-[2px] border-black" />
      <span className="ml-[12px]">Zipaquirá</span>
    </div>
    <div className="mt-[14px] ml-[56px] h-[32px] flex items-center">
      <div className="w-[40px] h-[32px] bg-[#e1e1e1] border-[2px] border-black" />
      <span className="ml-[15px]">{'<all other values>'}</span>
    </div>
    <div className="mt-[15px] h-[40px] flex items-center pl-[48px]">
      <Check />
      <span className="ml-[11px]">Topographic</span>
    </div>
  </div>
)

const MapTab = ({ className, label }) => (
  <div className={`h-[43px] shrink-0 flex items-center pt-[3px] ${className}`}>
    <MapThumb className="w-[32px] h-[32px] shrink-0" />
    <span className="ml-[11px] whitespace-nowrap">{label}</span>
  </div>
)

const StatusBar = () => (
  <div className="h-[48px] flex items-center bg-[#f5f7f6] border-b-[3px] border-[#d5d7d8] pl-[9px] pt-[2px] text-[23px] tracking-[-0.3px]">
    <div className="w-[200px] h-[42px] flex items-center justify-between bg-white border-y-[3px] border-[#8c8c8c] px-[10px] text-[#222] whitespace-nowrap">
      1:1,388,591
      <Tri />
    </div>
    <div className="ml-[9px] w-[2px] h-[30px] bg-[#aaa]" />
    <svg viewBox="0 0 40 40" className="ml-[8px] w-[40px] h-[40px]">
      <rect x="1" y="1" width="38" height="38" fill="#9ecbec" stroke="#0a6aa8" strokeWidth="2" />
      <path d="M5 5h22v22H5zM16 5v22M5 16h22" fill="none" stroke="#888" strokeWidth="2" />
      <path d="M19 30h18M28 21v18" stroke="#c0e0f6" strokeWidth="6" /><path d="M20 30h16M28 22v16" stroke="#666" strokeWidth="2" />
    </svg>
    <svg viewBox="0 0 28 28" className="ml-[6px] w-[27px] h-[27px]"><path d="M1 1h26v26H1zM9.500 1v26M18 1v26M1 9.500h26M1 18h26" fill="none" stroke="#a4a4a4" strokeWidth="2.2" /></svg>
    <svg viewBox="0 0 33 34" className="ml-[12px] w-[33px] h-[34px]">
      <path d="M2 33L27 8l4 25z" fill="#cfe6f6" />
      <path d="M10 22L23 9M19 9h4v4M10 18v4h4" fill="none" stroke="#4aa3d9" strokeWidth="2" />
      <path d="M1 6h10v5H1zM24 22h9v6h-9z" fill="#fff" stroke="#666" strokeWidth="2" /><path d="M20 6h11M25 1v10" stroke="#666" strokeWidth="2" />
      <rect x="1" y="27" width="6" height="6" fill="#5aa050" />
    </svg>
    <svg viewBox="0 0 33 34" className="ml-[8px] w-[33px] h-[34px]">
      <rect x="0" y="1" width="16" height="16" fill="#dfeedb" />
      <path d="M16 1v32M0 17h33" stroke="#555" strokeWidth="1.6" strokeDasharray="3 3" /><rect x="13" y="14" width="6" height="6" fill="#555" />
    </svg>
    <div className="ml-[8px] w-[33px] h-[34px] flex">
      <span className="w-[16px] font-['Liberation_Sans',sans-serif] font-bold text-[20px] leading-[34px] tracking-normal text-[#4aa3d9] pt-[1px]">N</span>
      <svg viewBox="0 0 17 34" className="w-[17px] h-[34px]">
        <path d="M1 1v32M1 32L16 17" stroke="#666" strokeWidth="1.6" />
        <path d="M6 2q6 3 5 10M7 9l4 4 4-4" fill="none" stroke="#4aa3d9" strokeWidth="2" />
      </svg>
    </div>
    <Chev className="ml-[13px] w-[16px] h-[10px]" color="#222" w={2.2} />
    <div className="ml-[17px] w-[2px] h-[30px] bg-[#aaa]" />
    <div className="w-[279px] shrink-0" />
    <span className="w-[319px] shrink-0 whitespace-nowrap text-[#333]">74.5080578°W 5.9275486°N</span>
    <Chev className="w-[15px] h-[9px]" color="#555" w={2.4} />
    <div className="w-[285px] shrink-0" />
    <div className="w-[2px] h-[30px] bg-[#bbb]" />
    <svg viewBox="0 0 26 36" className="ml-[14px] w-[26px] h-[36px]">
      <circle cx="10" cy="18" r="9" fill="#e8f4fb" stroke="#8fc4e4" strokeWidth="2" /><path d="M15 25l8 10" stroke="#d8bc90" strokeWidth="3" />
      <path d="M6 18h8M10 14v8" stroke="#8fc4e4" strokeWidth="1.6" /><path d="M12 1h12v14l-5 3-7-6z" fill="none" stroke="#aaa" strokeWidth="1.6" />
    </svg>
    <span className="ml-[14px] w-[228px] shrink-0 whitespace-nowrap text-[#a2a2a2]">Selected Features: 0</span>
    <div className="w-[2px] h-[30px] bg-[#bbb]" />
    <svg viewBox="0 0 24 30" className="ml-[16px] w-[24px] h-[30px]"><path d="M1 1h22v28H1zM1 12l11 7 11-13M12 19v10" fill="none" stroke="#b8b8b8" strokeWidth="2" /></svg>
    <div className="ml-[20px] w-[2px] h-[30px] bg-[#bbb]" />
    <div className="ml-[12px] w-[8px] h-[30px] bg-[#5e5e5e]" />
    <div className="ml-[8px] w-[8px] h-[30px] bg-[#5e5e5e]" />
    <div className="ml-[17px] w-[2px] h-[30px] bg-[#bbb]" />
    <svg viewBox="0 0 30 34" className="ml-[11px] w-[30px] h-[34px]">
      <path d="M3 14C4 7 9 3 15 3c4 0 7 1 9 4M27 20c-1 7-6 11-12 11-4 0-7-1-9-4" fill="none" stroke="#3d9ad6" strokeWidth="4.5" />
      <path d="M18 11l10 1V2zM12 23L2 22v10z" fill="#3d9ad6" />
    </svg>
  </div>
)

const Center = () => (
  <div className="w-[1837px] shrink-0 flex flex-col text-[23px] tracking-[-0.2px] text-[#222]">
    <div className="h-[43px] flex items-center">
      <MapTab className="w-[206px] pl-[12px]" label="POTLayer" />
      <MapTab className="w-[236px] pl-[12px]" label="CountyLimit" />
      <div className="w-[256px] h-[43px] shrink-0 flex items-center bg-[#0a9eeb] rounded-t-[6px] pl-[12px] pt-[3px]">
        <MapThumb className="w-[32px] h-[32px] shrink-0" />
        <span className="ml-[11px] w-[158px] text-white whitespace-nowrap">PopulationGIS</span>
        <div className="w-[37px] h-[36px] bg-[#bfe4fb] flex items-center justify-center">
          <Cross className="w-[19px] h-[19px]" color="#24506e" />
        </div>
      </div>
      <div className="w-[178px] h-[43px] shrink-0 flex items-center pl-[12px] pt-[3px]">
        <svg viewBox="0 0 32 34" className="w-[32px] h-[34px] shrink-0">
          <path d="M1.500 1.500H23L30.500 9v23.500h-29z" fill="#fff" stroke="#727272" strokeWidth="3" />
          <path d="M5 6h17v14H5z" fill="#58a9de" /><path d="M9 8h8l-3 5-4 2zM14 20l6-7 2 7z" fill="#cfe6f6" />
          <path d="M6 25h10M6 29h6" stroke="#777" strokeWidth="2" /><path d="M21 29l3-5 3 5z" fill="#58a9de" />
        </svg>
        <span className="ml-[11px]">Layout</span>
      </div>
      <MapTab className="w-[401px] pl-[12px]" label="Localizacion Departamental" />
      <div className="w-[345px] h-[43px] shrink-0 flex items-center bg-[#d2d3d6] rounded-t-[6px] pl-[11px] pt-[3px] text-[#555]">
        <MapThumb className="w-[32px] h-[32px] shrink-0" />
        <span className="ml-[11px] w-[256px] whitespace-nowrap">Localizacion Municipal</span>
        <Cross className="w-[20px] h-[20px]" color="#666" w={1.6} />
      </div>
      <div className="flex-1 flex justify-end pr-[9px]"><Chev className="w-[15px] h-[9px]" color="#666" /></div>
    </div>
    <div className="h-[6px] bg-[#d2d3d6]" />
    <div className="flex-1 flex flex-col border-l-[3px] border-[#e2e3e4]">
      <div className="flex-1 bg-white overflow-hidden"><MapDrawing /></div>
      <StatusBar />
    </div>
  </div>
)

const Field = ({ label, children, className }) => (
  <div className={`flex items-center justify-between pl-[47px] pr-[11px] ${className}`}>
    <span className="pt-[2px]">{label}</span>
    {children}
  </div>
)
const SwatchBtn = ({ children }) => (
  <div className="w-[71px] h-full flex items-center bg-white border-[2px] border-[#8c8c8c] pl-[4px]">
    {children}
    <Tri className="ml-[9px] w-[13px] h-[8px]" color="#666" />
  </div>
)
const DockTab = ({ className, children }) => (
  <div className={`h-[38px] flex items-center shrink-0 whitespace-nowrap ${className}`}>{children}</div>
)

const Symbology = () => (
  <div className="w-[685px] shrink-0 flex flex-col text-[23px] tracking-[-0.15px] text-[#555]">
    <div className="flex-1 flex flex-col rounded-t-[6px] bg-[#f7f9f9] border-[2px] border-b-[3px] border-[#dedfe0]">
      <div className="h-[62px] flex items-center pl-[11px] pt-[2px]">
        <span className="text-[31px] text-[#111] tracking-[-0.1px] flex-1">Symbology - Depto</span>
        <Chev className="w-[15px] h-[9px]" color="#444" />
        <Pin className="ml-[21px] w-[14px] h-[20px]" />
        <Cross className="ml-[19px] mr-[11px] w-[20px] h-[20px]" color="#444" w={2.2} />
      </div>
      <div className="h-[40px] flex items-center pl-[12px]">
        <svg viewBox="0 0 36 36" className="w-[36px] h-[36px] shrink-0">
          <circle cx="18" cy="18" r="16.500" fill="none" stroke="#777" strokeWidth="2" />
          <path d="M16 9l-9 9 9 9M8 18h20" fill="none" stroke="#555" strokeWidth="3" />
        </svg>
        <span className="ml-[133px] text-[29px] tracking-[-0.2px] w-[456px] whitespace-nowrap">Format Polygon Symbol</span>
        <div className="w-[28px] flex flex-col gap-[4px]">
          <div className="h-[7px] rounded-[2px] bg-[#666]" /><div className="h-[7px] rounded-[2px] bg-[#666]" /><div className="h-[7px] rounded-[2px] bg-[#666]" />
        </div>
      </div>
      <div className="mt-[14px] ml-[14px] flex text-[24px]">
        <div className="h-[44px] w-[99px] pt-[3px] leading-[34px]">Gallery</div>
        <div className="h-[44px] w-[122px] border-b-[4px] border-[#0079c1] pt-[3px] leading-[34px] font-medium tracking-[-0.1px] whitespace-nowrap">Properties</div>
      </div>
      <div className="mt-[25px] ml-[15px] h-[45px] flex items-center">
        <div className="w-[64px] flex justify-center">
          <svg viewBox="0 0 40 46" className="w-[40px] h-[45px]">
            <path d="M39 1L15 29l5 5z" fill="#666" /><path d="M12 31c-4 2-4 7-6 10l-5 4c6 1 15 0 17-8z" fill="#a67c52" />
          </svg>
        </div>
        <div className="w-[64px] flex justify-center">
          <svg viewBox="0 0 44 46" className="w-[44px] h-[45px]">
            <path d="M1 33l21-13 21 13-21 13z" fill="#d6eafa" stroke="#61b0e6" strokeWidth="1.5" />
            <path d="M1 23l21-13 21 13-21 13z" fill="#d4d4d4" stroke="#888" strokeWidth="1.5" />
            <path d="M1 13L22 1l21 12-21 13z" fill="#d6eafa" stroke="#61b0e6" strokeWidth="1.5" />
          </svg>
        </div>
        <div className="w-[64px] flex justify-center">
          <svg viewBox="0 0 44 46" className="w-[44px] h-[45px]">
            <path d="M2 38L28 12c-2-7 4-12 11-11l-6 6 2 6 6 1 2-5c2 7-4 14-12 12L12 44c-3 3-12 1-10-6z" fill="#8e8e8e" />
            <circle cx="7" cy="40" r="2.500" fill="#eee" />
          </svg>
        </div>
      </div>
      <div className="mt-[15px] ml-[15px] flex items-end">
        <div className="w-[64px] h-[6px] bg-[#0079c1]" />
        <div className="w-[128px] h-[2px] bg-[#c6c8c8]" />
      </div>
      <div className="mt-[22px] ml-[24px] h-[30px] flex items-center">
        <Chev className="w-[15px] h-[9px]" color="#555" w={3} />
        <span className="ml-[8px] text-[25px] font-medium tracking-[0.1px] text-[#444]">Appearance</span>
      </div>
      <Field label="Color" className="mt-[11px] h-[47px]">
        <SwatchBtn>
          <svg viewBox="0 0 36 36" className="w-[36px] h-[36px] border-[2px] border-[#888]">
            <rect width="36" height="36" fill="#fff" />
            <path d="M0 0h9v9H0zM18 0h9v9h-9zM9 9h9v9H9zM27 9h9v9h-9zM0 18h9v9H0zM18 18h9v9h-9zM9 27h9v9H9zM27 27h9v9h-9z" fill="#c8c8c8" />
          </svg>
        </SwatchBtn>
      </Field>
      <Field label="Outline color" className="mt-[10px] h-[46px]">
        <SwatchBtn><div className="w-[36px] h-[36px] bg-black border-[2px] border-[#888]" /></SwatchBtn>
      </Field>
      <Field label="Outline width" className="mt-[10px] h-[47px]">
        <div className="w-[159px] h-full flex items-center justify-between bg-white border-[2px] border-[#8c8c8c] pl-[8px] pr-[8px] text-[#222]">
          2 pt
          <div className="flex flex-col gap-[11px]">
            <ChevUp className="w-[14px] h-[8px]" color="#666" />
            <Chev className="w-[14px] h-[8px]" color="#666" />
          </div>
        </div>
      </Field>
      <div className="mt-[17px] ml-[47px] h-[28px] flex items-center">
        <div className="w-[28px] h-[28px] bg-white border-[2px] border-[#999]" />
        <span className="ml-[19px]">Enable scale-based sizing</span>
      </div>
      <Field label="Angle alignment" className="mt-[26px] h-[46px]">
        <div className="w-[159px] h-full flex items-center justify-between bg-white border-[2px] border-[#8c8c8c] pl-[5px] pr-[11px] text-[#222]">
          Map
          <Tri />
        </div>
      </Field>
      <div className="flex-1" />
      <div className="mx-[11px] h-[18px] flex flex-col justify-between">
        <div className="h-[4px] bg-[#cdcdcd]" />
        <div className="h-[4px] bg-[#cdcdcd]" />
      </div>
      <div className="h-[4px] -mt-[11px] flex justify-center gap-[2px]">
        <div className="w-[7px] h-[7px] -mt-[2px] rounded-full bg-[#cdcdcd]" />
        <div className="w-[7px] h-[7px] -mt-[2px] rounded-full bg-[#cdcdcd]" />
        <div className="w-[7px] h-[7px] -mt-[2px] rounded-full bg-[#cdcdcd]" />
      </div>
      <div className="mt-[37px] mx-[11px] h-[343px] flex items-center justify-center bg-[#ececec] border-[2px] border-[#888]">
        <div className="w-[218px] h-[128px] -ml-[2px] -mt-[4px] border-[5px] border-black rounded-[2px]" />
      </div>
      <div className="mt-[11px] h-[47px] flex items-stretch pl-[207px]">
        <div className="w-[120px] flex items-center justify-between bg-white border-[2px] border-[#999] pl-[9px] pr-[9px] text-[#222]">
          100%
          <Chev className="w-[14px] h-[9px]" color="#555" />
        </div>
        <div className="ml-[12px] w-[75px] flex bg-white border-[2px] border-[#aaa]">
          <div className="w-[52px] flex items-center justify-center"><div className="w-[36px] h-[24px] bg-[#7f7f7f] rounded-[1px]" /></div>
          <div className="flex-1 flex items-center justify-center bg-[#dcddde] border-l-[1px] border-[#aaa]"><Chev className="w-[14px] h-[9px]" color="#555" /></div>
        </div>
        <div className="ml-[13px] w-[47px] flex items-center justify-center bg-white border-[2px] border-[#aaa]">
          <svg viewBox="0 0 32 32" className="w-[32px] h-[32px]">
            <path d="M2 2l8 8M10 2l-8 8" stroke="#777" strokeWidth="3" />
            <path d="M2 30L30 2" stroke="#aaa" strokeWidth="2" /><path d="M10 31L31 10" stroke="#888" strokeWidth="2" strokeDasharray="4 3" />
          </svg>
        </div>
      </div>
      <div className="mt-[12px] h-[46px] flex items-center pl-[21px]">
        <span className="w-[127px] whitespace-nowrap tracking-[-0.4px]">Auto Apply</span>
        <div className="w-[52px] h-[28px] rounded-full bg-[#a4a4a4] flex items-center">
          <div className="w-[26px] h-[26px] rounded-full bg-white border-[2px] border-[#a4a4a4]" />
        </div>
        <div className="ml-[213px] w-[104px] h-full flex items-center justify-center bg-white border-[2px] border-[#b4b4b4] text-[#aaa]">Apply</div>
        <div className="ml-[21px] w-[114px] h-full flex items-center justify-center bg-white border-[2px] border-[#b4b4b4] text-[#aaa]">Cancel</div>
      </div>
      <div className="h-[11px]" />
    </div>
    <div className="h-[38px] -mt-[2px] flex">
      <DockTab className="w-[118px] pl-[11px]">Catalog</DockTab>
      <DockTab className="w-[139px]">Label Cla...</DockTab>
      <DockTab className="w-[150px]">Geoproce...</DockTab>
      <DockTab className="w-[143px]">Chart Pro...</DockTab>
      <DockTab className="w-[135px] pl-[9px] bg-[#f7f9f9] rounded-b-[6px] border-x-[2px] border-b-[2px] border-[#dedfe0] text-[#0079c1] tracking-[-0.3px]">Symbolo...</DockTab>
    </div>
  </div>
)

export default function App() {
  return (
    <div className="w-[3072px] h-[1838px] overflow-hidden flex flex-col bg-[#ececec] font-['Open_Sans',sans-serif]">
      <div className="bg-[#f7f9f9] h-[303px] shrink-0">
        <TitleBar />
        <MenuRow />
        <Ribbon />
      </div>
      <div className="h-[3px] bg-[#c9cbcc] shrink-0" />
      <div className="mt-[12px] ml-[12px] h-[1494px] shrink-0 flex">
        <Contents />
        <div className="w-[13px] shrink-0" />
        <Center />
        <div className="w-[14px] shrink-0" />
        <Symbology />
      </div>
      <div className="mt-[14px] h-[3px] bg-[#bbbcbc] shrink-0" />
    </div>
  )
}
